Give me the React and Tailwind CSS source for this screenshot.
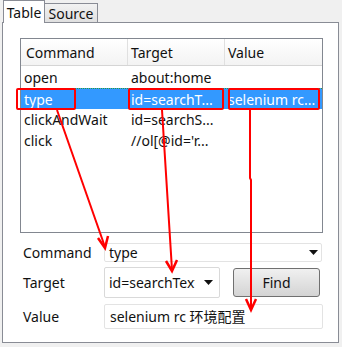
import React from 'react';

const font = { fontFamily: '"Noto Sans", "Noto Sans CJK SC", sans-serif' };

const rows = [
  { cmd: 'open', target: 'about:home', value: '' },
  { cmd: 'type', target: 'id=searchT...', value: 'selenium rc...', selected: true },
  { cmd: 'clickAndWait', target: 'id=searchS...', value: '' },
  { cmd: 'click', target: "//ol[@id='r...", value: '' },
];

function Caret() {
  return (
    <svg width="9" height="5" viewBox="0 0 9 5" className="shrink-0">
      <path d="M0 0h9L4.5 5z" fill="#111" />
    </svg>
  );
}

function Annotations() {
  return (
    <svg
      className="absolute inset-0 pointer-events-none"
      width="342"
      height="347"
      viewBox="0 0 342 347"
      fill="none"
      stroke="#ff0000"
      strokeWidth="2"
    >
      <rect x="17" y="89" width="58" height="20" rx="1" />
      <rect x="129" y="89" width="94" height="20" rx="1" />
      <rect x="229" y="89" width="90" height="20" rx="1" />
      <path d="M57 110 L105 247" />
      <path d="M98 238 L105 248 L108 236" strokeWidth="2.5" />
      <path d="M162 110 L172 270" />
      <path d="M166 261 L172 271 L177 260" strokeWidth="2.5" />
      <path d="M250 110 L250 178 L251 180 L251 309" />
      <path d="M246 299 L251 310 L256 299" strokeWidth="2.5" />
    </svg>
  );
}

export default function App() {
  return (
    <div
      className="relative w-[342px] h-[347px] bg-[#f0f0f0] text-[14px] text-[#111]"
      style={font}
    >
      <div className="flex items-end h-[22px] pl-[3px]">
        <div className="relative z-10 w-[42px] h-[23px] bg-white border border-b-0 border-[#898c95] flex items-center justify-center -mb-[1px]">
          Table
        </div>
        <div className="w-[53px] h-[19px] bg-gradient-to-b from-[#f2f2f2] to-[#e0e0e0] border border-b-0 border-l-0 border-[#898c95] flex items-center justify-center">
          Source
        </div>
      </div>

      <div className="ml-[2px] w-[337px] h-[321px] bg-white border border-[#898c95] pl-[17px] pt-[15px]">
        <div className="w-[303px] h-[195px] border border-[#828790] bg-white">
          <div className="flex h-[27px] bg-gradient-to-b from-white to-[#f3f3f3] border-b border-[#d5d5d5]">
            <div className="w-[107px] pl-[5px] flex items-center border-r border-[#e0e0e0]">Command</div>
            <div className="w-[97px] pl-[3px] flex items-center border-r border-[#e0e0e0]">Target</div>
            <div className="flex-1 pl-[3px] flex items-center">Value</div>
          </div>
          <div className="pt-[1px]">
            {rows.map((r) => (
              <div
                key={r.cmd}
                className={
                  r.selected
                    ? 'flex h-[21px] items-center bg-[#3399ff] text-white border-t border-dotted border-[#2e9a3a]'
                    : 'flex h-[21px] items-center'
                }
              >
                <div className="w-[107px] pl-[3px] whitespace-nowrap overflow-hidden">{r.cmd}</div>
                <div className="w-[97px] pl-[3px] whitespace-nowrap overflow-hidden">{r.target}</div>
                <div className="flex-1 pl-[3px] whitespace-nowrap overflow-hidden">{r.value}</div>
              </div>
            ))}
          </div>
        </div>

        <div className="mt-[10px] flex items-center h-[19px]">
          <div className="w-[84px] pl-[3px]">Command</div>
          <div className="w-[218px] h-[19px] border border-[#e3e3e3] rounded-[2px] flex items-center justify-between pl-[4px] pr-[3px]">
            <span>type</span>
            <Caret />
          </div>
        </div>

        <div className="mt-[5px] flex items-center h-[31px]">
          <div className="w-[84px] pl-[3px]">Target</div>
          <div className="w-[116px] h-[31px] border border-[#d9d9d9] rounded-[2px] flex items-center pl-[4px] pr-[6px]">
            <span className="block w-[86px] shrink-0 whitespace-nowrap overflow-hidden">id=searchText</span>
            <span className="flex-1" />
            <Caret />
          </div>
          <button className="ml-[13px] w-[87px] h-[29px] rounded-[3px] border border-[#707070] bg-gradient-to-b from-[#f0f0f0] to-[#d4d4d4]">
            Find
          </button>
        </div>

        <div className="mt-[6px] flex items-center h-[25px]">
          <div className="w-[84px] pl-[3px]">Value</div>
          <div className="w-[219px] h-[25px] border border-[#e3e3e3] rounded-[2px] flex items-center pl-[5px]">
            selenium rc 环境配置
          </div>
        </div>
      </div>

      <Annotations />
    </div>
  );
}
